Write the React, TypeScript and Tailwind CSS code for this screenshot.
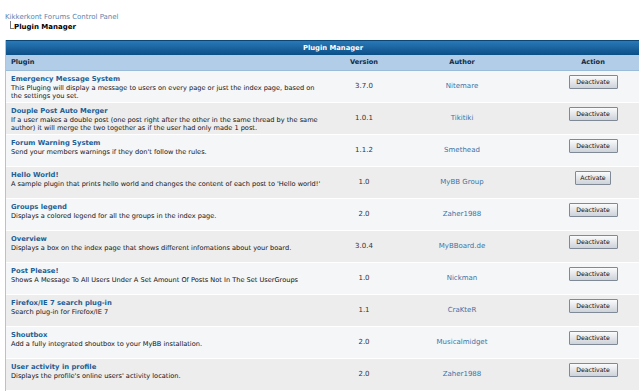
import React from 'react';

type Plugin = {
    name: string;
    desc: string;
    version: string;
    author: string;
    active: boolean;
};

const plugins: Plugin[] = [
    { name: 'Emergency Message System', desc: 'This Pluging will display a message to users on every page or just the index page, based on the settings you set.', version: '3.7.0', author: 'Nitemare', active: true },
    { name: 'Douple Post Auto Merger', desc: 'If a user makes a double post (one post right after the other in the same thread by the same author) it will merge the two together as if the user had only made 1 post.', version: '1.0.1', author: 'Tikitiki', active: true },
    { name: 'Forum Warning System', desc: "Send your members warnings if they don't follow the rules.", version: '1.1.2', author: 'Smethead', active: true },
    { name: 'Hello World!', desc: "A sample plugin that prints hello world and changes the content of each post to 'Hello world!'", version: '1.0', author: 'MyBB Group', active: false },
    { name: 'Groups legend', desc: 'Displays a colored legend for all the groups in the index page.', version: '2.0', author: 'Zaher1988', active: true },
    { name: 'Overview', desc: 'Displays a box on the index page that shows different infomations about your board.', version: '3.0.4', author: 'MyBBoard.de', active: true },
    { name: 'Post Please!', desc: 'Shows A Message To All Users Under A Set Amount Of Posts Not In The Set UserGroups', version: '1.0', author: 'Nickman', active: true },
    { name: 'Firefox/IE 7 search plug-in', desc: 'Search plug-in for Firefox/IE 7', version: '1.1', author: 'CraKteR', active: true },
    { name: 'Shoutbox', desc: 'Add a fully integrated shoutbox to your MyBB installation.', version: '2.0', author: 'Musicalmidget', active: true },
    { name: 'User activity in profile', desc: "Displays the profile's online users' activity location.", version: '2.0', author: 'Zaher1988', active: true },
];

const cols = 'grid grid-cols-[324px_68px_128px_134px]';

function App() {
    return (
        <div className="w-[639px] h-[391px] overflow-hidden bg-white text-black" style={{ fontFamily: '"DejaVu Sans", Verdana, sans-serif' }}>
            {/* breadcrumb */}
            <div className="pt-[13px] pl-[5px] h-[40px]">
                <div className="text-[7px] leading-[8px] text-[#5a86b0]">Kikkerkont Forums Control Panel</div>
                <div className="flex items-end pl-[5px]">
                    <div className="w-[4px] h-[8px] border-l border-b border-[#777] mb-[3px]" />
                    <div className="text-[7px] leading-[10px] font-bold">Plugin Manager</div>
                </div>
            </div>

            <div className="ml-[5px] w-[655px] border-l border-[#b8c2cc]">
                <div className="h-[15px] bg-gradient-to-b from-[#2a79b8] to-[#0b4f87] text-white font-bold text-[6.8px] flex items-center justify-center border-t border-[#0a4676]">
                    Plugin Manager
                </div>
                <div className={`${cols} h-[16px] bg-[#b1cde7] border-b border-[#9bbcd9] text-[#102b45] font-bold text-[6.6px] items-center`}>
                    <div className="pl-[5px]">Plugin</div>
                    <div className="text-center">Version</div>
                    <div className="text-center">Author</div>
                    <div className="text-center">Action</div>
                </div>
                {plugins.map((p, i) => (
                    <div key={p.name} className={`${cols} h-[32px] border-b border-white ${i % 2 === 0 ? 'bg-[#f5f6f7]' : 'bg-[#ededed]'}`}>
                        <div className="pl-[5px] pt-[4px] pr-[5px]">
                            <div className="text-[6.8px] leading-[9px] font-bold text-[#1d5f95]">{p.name}</div>
                            <div className="text-[6.6px] leading-[8px] text-[#111]">{p.desc}</div>
                        </div>
                        <div className="flex items-center justify-center text-[7px] text-[#333]">{p.version}</div>
                        <div className="flex items-center justify-center text-[7px] text-[#3b73a6]">{p.author}</div>
                        <div className="flex justify-center pt-[4px]">
                            <button
                                className={`h-[14px] ${p.active ? 'w-[49px]' : 'w-[36px]'} border border-[#7f8a96] rounded-[1px] bg-gradient-to-b from-[#fafbfc] to-[#cdd3da] text-[6.2px] leading-[12px] text-[#111]`}
                                style={{ fontFamily: 'Tahoma, "DejaVu Sans", sans-serif' }}
                            >
                                {p.active ? 'Deactivate' : 'Activate'}
                            </button>
                        </div>
                    </div>
                ))}
            </div>
        </div>
    );
}

export default App;
